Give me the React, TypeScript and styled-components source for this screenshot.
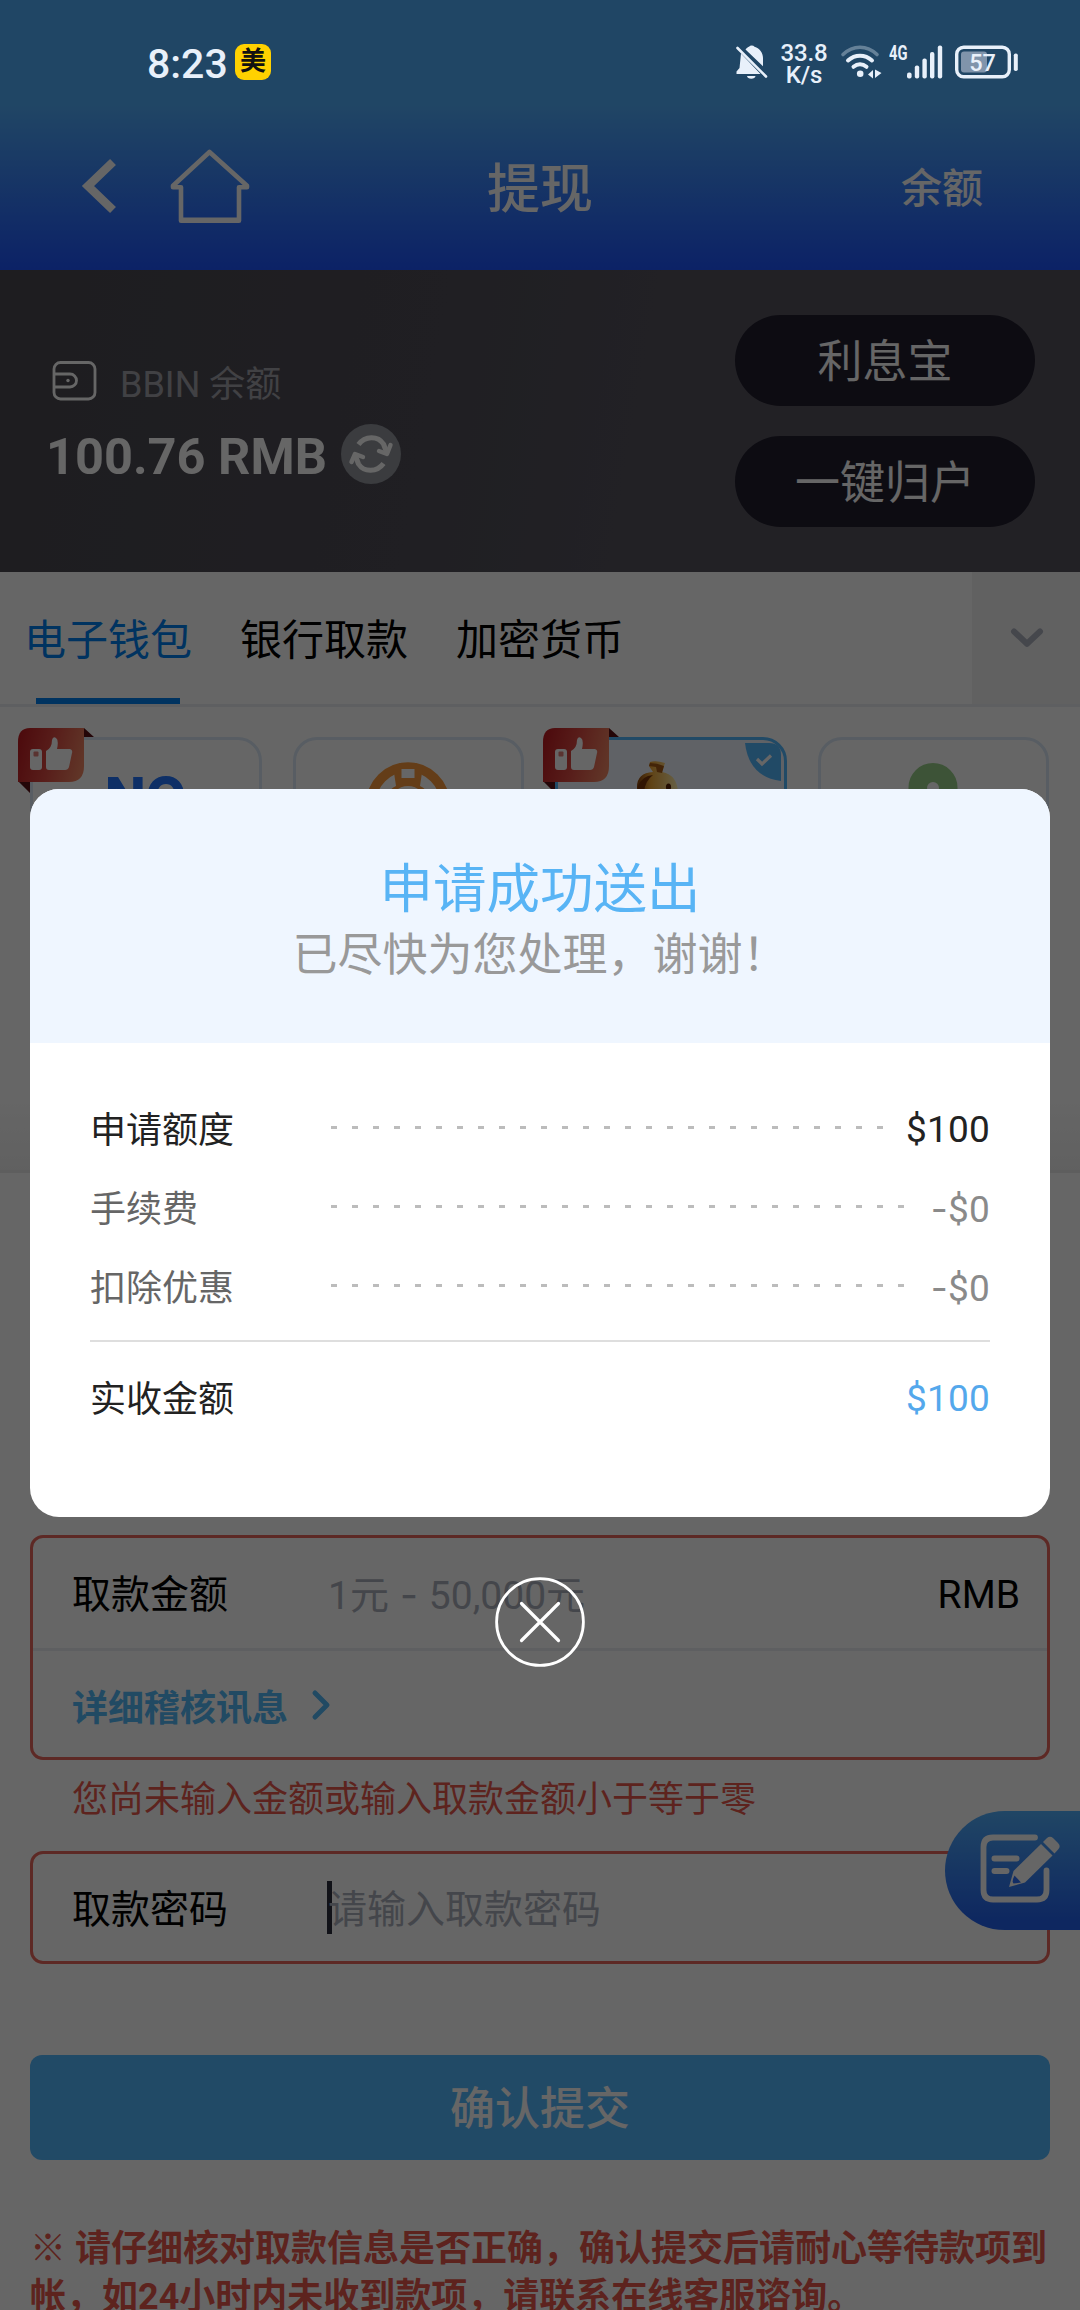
import React from "react";
import styled, { createGlobalStyle } from "styled-components";

const GlobalStyle = createGlobalStyle`
  *, *::before, *::after { box-sizing: border-box; }
  html, body { margin: 0; padding: 0; background: #fff; }
  body { font-family: Roboto, "Noto Sans CJK SC", sans-serif; color: #000; }
  svg { display: block; flex: none; }
`;

const Page = styled.div`
  position: relative;
  width: 1080px;
  height: 2310px;
  overflow: hidden;
  background: #fff;
`;

/* ---------- header ---------- */

const Header = styled.header`
  height: 270px;
  background: linear-gradient(#52affc 0, #52affc 104px, #1e55ff 270px);
`;

const StatusBar = styled.div`
  position: relative;
  z-index: 3;
  height: 104px;
  padding: 20px 61px 0 147px;
  display: flex;
  align-items: center;
  color: #e8f0fa;
`;

const Clock = styled.span`
  font-size: 41px;
  line-height: 48px;
  font-weight: 500;
  width: 88px;
  padding-top: 3px;
`;

const AppBadge = styled.span`
  width: 36px;
  height: 36px;
  border-radius: 9px;
  background: #ffd100;
  color: #111;
  font-size: 26px;
  line-height: 34px;
  font-weight: 700;
  text-align: center;
`;

const StatusIcons = styled.div`
  margin-left: auto;
  display: flex;
  align-items: center;
`;

const NetSpeed = styled.div`
  width: 50px;
  margin: 3px 11px 0 10px;
  font-size: 24px;
  font-weight: 500;
  line-height: 22px;
  text-align: center;
  letter-spacing: -0.2px;
`;

const NavBar = styled.div`
  height: 166px;
  padding: 0 97px 0 81px;
  display: grid;
  grid-template-columns: 1fr auto 1fr;
  align-items: center;
  color: #fff;
`;

const NavLeft = styled.div`
  display: flex;
  align-items: center;
  gap: 51px;
  padding-bottom: 2px;
`;

const NavTitle = styled.h1`
  margin: 5px 0 0 16px;
  font-size: 53px;
  line-height: 60px;
  font-weight: 500;
`;

const NavAction = styled.span`
  justify-self: end;
  padding-top: 3px;
  font-size: 41px;
  line-height: 48px;
  font-weight: 500;
`;

/* ---------- balance ---------- */

const Balance = styled.section`
  height: 302px;
  padding: 45px 45px 0 46px;
  display: flex;
  justify-content: space-between;
  background: linear-gradient(100deg, #4b4951 0%, #504e57 40%, #56545e 62%, #56545e 100%);
`;

const BalanceInfo = styled.div`
  padding-top: 43px;
`;

const BalanceLabel = styled.div`
  display: flex;
  align-items: center;
  height: 45px;
  gap: 23px;
  padding-left: 5px;
  font-size: 36px;
  color: #a3a3ab;
`;

const BalanceAmount = styled.div`
  display: flex;
  align-items: center;
  height: 60px;
  margin-top: 21px;
  gap: 17px;
  font-size: 50.5px;
  font-weight: 700;
  color: #fff;
`;

const AmountText = styled.span`
  width: 278px;
  white-space: nowrap;
  padding-top: 5px;
`;

const PillGroup = styled.div`
  display: flex;
  flex-direction: column;
  gap: 30px;
`;

const Pill = styled.button`
  width: 300px;
  height: 91px;
  border: 0;
  border-radius: 46px;
  padding: 5px 0 0;
  background: #211e2d;
  color: #fff;
  font: 400 45px/60px Roboto, "Noto Sans CJK SC", sans-serif;
`;

/* ---------- tabs ---------- */

const Tabs = styled.nav`
  display: flex;
  height: 135px;
  padding-left: 24px;
  border-bottom: 3px solid #eceef2;
`;

const Tab = styled.div<{ $active?: boolean }>`
  width: 168px;
  margin-right: 48px;
  height: 132px;
  display: flex;
  flex-direction: column;
  align-items: center;
  font-size: 42px;
  line-height: 60px;
  padding-top: 39px;
  white-space: nowrap;
  color: ${(p) => (p.$active ? "#0080f0" : "#000")};
  &::after {
    content: "";
    width: 144px;
    height: 6px;
    margin-top: auto;
    background: ${(p) => (p.$active ? "#0080f0" : "transparent")};
  }
`;

const TabMore = styled.div`
  width: 108px;
  height: 132px;
  margin-left: auto;
  display: flex;
  align-items: center;
  justify-content: center;
  padding-left: 1px;
  background: #f3f3f3;
`;

/* ---------- wallet cards ---------- */

const Wallets = styled.section`
  height: 466px;
  padding: 30px 30px 0;
  display: flex;
  gap: 31px;
  background: linear-gradient(#fff 0, #fff 390px, #f1f1f1 463px);
  border-bottom: 3px solid #eaeaea;
`;

const WalletCard = styled.div<{ $selected?: boolean }>`
  position: relative;
  width: 231.5px;
  height: 200px;
  border: 3px solid ${(p) => (p.$selected ? "#54b8ff" : "#dbe9f7")};
  border-radius: 24px;
  display: flex;
  justify-content: center;
  background: ${(p) => (p.$selected ? "#f0f6ff" : "#fff")};
`;

const Recommend = styled.span`
  position: absolute;
  left: -15px;
  top: -13px;
`;

const SelectedMark = styled.span`
  position: absolute;
  right: 3px;
  top: 3px;
`;

const WordLogo = styled.span`
  margin-top: 27px;
  font: 800 53px/60px Inter, sans-serif;
  color: #2377ff;
`;

const LogoSlot = styled.span<{ $top: number; $shift?: number }>`
  margin-top: ${(p) => p.$top}px;
  margin-left: ${(p) => p.$shift ?? 0}px;
`;

/* ---------- form ---------- */

const Form = styled.form`
  padding: 362px 30px 0;
`;

const FieldBox = styled.div`
  border: 3px solid #e9685c;
  border-radius: 13px;
`;

const Field = styled.div<{ $h: number }>`
  height: ${(p) => p.$h}px;
  display: flex;
  align-items: center;
  padding: 4px 27px 0 39px;
  font-size: 39px;
  line-height: 54px;
`;

const FieldLabel = styled.label`
  width: 255px;
`;

const Placeholder = styled.span`
  flex: 1;
  padding-left: 1px;
  color: #abb0bb;
  white-space: pre;
`;

const Dash = styled.span`
  font-family: Inter, sans-serif;
`;

const Caret = styled.i`
  width: 5px;
  height: 53px;
  margin: -4px -5px 0 0;
  background: #2c2e3e;
`;

const AuditLink = styled.div`
  height: 109px;
  border-top: 3px solid #eceef2;
  padding: 2px 39px 0;
  display: flex;
  align-items: center;
  gap: 23px;
  font-size: 36px;
  font-weight: 700;
  color: #54b8f8;
`;

const ErrorText = styled.p`
  margin: 0;
  height: 91px;
  padding: 15px 42px 0;
  font-size: 36px;
  line-height: 50px;
  color: #e9594d;
`;

const Submit = styled.button`
  display: block;
  width: 1020px;
  height: 105px;
  margin: 91px 0 0;
  padding: 5px 0 0;
  border: 0;
  border-radius: 12px;
  background: #54b8ff;
  color: #fff;
  font: 500 45px/60px Roboto, "Noto Sans CJK SC", sans-serif;
`;

const Notice = styled.p`
  margin: 65px -10px 0 0;
  font-size: 36px;
  line-height: 48px;
  font-weight: 700;
  color: #e9594d;
`;

const FloatButton = styled.div`
  position: absolute;
  right: 0;
  top: 1811px;
  width: 135px;
  height: 119px;
  padding: 21px 0 0 33px;
  border-radius: 60px 0 0 60px;
  background: linear-gradient(#52affc, #2463f0 92%);
`;

/* ---------- dialog ---------- */

const Overlay = styled.div`
  position: absolute;
  inset: 0;
  z-index: 2;
  padding-top: 789px;
  display: flex;
  flex-direction: column;
  align-items: center;
  gap: 60px;
  background: rgba(0, 0, 0, 0.6);
`;

const Dialog = styled.div`
  width: 1020px;
  height: 728px;
  border-radius: 29px;
  overflow: hidden;
  background: #fff;
`;

const DialogHead = styled.div`
  height: 254px;
  padding-top: 68px;
  background: #eff6ff;
  text-align: center;
`;

const DialogTitle = styled.h2`
  margin: 0;
  font-size: 53.5px;
  line-height: 66px;
  font-weight: 400;
  color: #58b4f5;
`;

const DialogSub = styled.p`
  margin: 0;
  font-size: 45px;
  line-height: 66px;
  color: #999;
`;

const DialogBody = styled.div`
  padding: 46px 60px 0;
`;

const Row = styled.div<{ $tone: string }>`
  height: 79px;
  display: flex;
  align-items: center;
  font-size: 36px;
  line-height: 50px;
  color: ${(p) => p.$tone};
`;

const RowLabel = styled.span`
  width: 241px;
  padding-top: 4px;
`;

const Leader = styled.span`
  flex: 1;
  height: 3px;
  margin: -2px 17px 0 0;
  background: repeating-linear-gradient(90deg, #bcbcbc 0 6px, transparent 6px 21px);
`;

const Amount = styled.span<{ $tone: string }>`
  margin-left: auto;
  padding-top: 3px;
  letter-spacing: 0.2px;
  font-size: 37px;
  color: ${(p) => p.$tone};
`;

const Total = styled(Row)`
  margin-top: 14px;
  padding-top: 31px;
  height: 82px;
  border-top: 2px solid #dedede;
`;

const CloseButton = styled.button`
  width: 90px;
  height: 90px;
  padding: 0;
  border: 0;
  background: none;
`;

/* ---------- drawings ---------- */

const BellOff = () => (
  <svg width="34" height="36" viewBox="0 0 34 36" fill="#e8f0fa">
    <path d="M10.500 5.500C11.500 4 13 3 14 2.700a3.200 2.600 0 0 1 5.500 0C25 4.500 28 9 28 14v8.200Z" />
    <path d="M6 9.500 25.500 30H1.500v-2.500L4.500 24Z" />
    <path d="M12 32h8.500a4.300 3.200 0 0 1-8.500 0Z" />
    <path d="M2.500 4 31 32.500" stroke="#e8f0fa" strokeWidth="2.600" strokeLinecap="round" />
  </svg>
);

const Wifi = () => (
  <svg width="42" height="36" viewBox="0 0 42 36" fill="none" stroke="#e8f0fa" strokeLinecap="round">
    <path d="M3 10.500C13 .800 27 .800 37 10.500" strokeWidth="3.600" opacity=".35" />
    <path d="M8 16.500c7-6.400 17-6.400 24 0" strokeWidth="4" />
    <path d="M13.500 22.800c4-3.300 9-3.300 13 0" strokeWidth="4" />
    <circle cx="20.200" cy="29.800" r="3.300" fill="#e8f0fa" stroke="none" />
    <path d="M28 30.500l5-4.500v8.500ZM35 25.500l6.500 3.500-6.500 5Z" fill="#e8f0fa" stroke="none" />
  </svg>
);

const SignalBox = styled.div`
  display: flex;
  margin: 0 10px 0 7px;
`;

const Signal = () => (
  <SignalBox>
    <svg width="56" height="36" viewBox="0 0 56 36" fill="#e8f0fa">
      <text x="0" y="15.500" fontFamily="Roboto" fontWeight="700" fontSize="19.500" textLength="18.500" lengthAdjust="spacingAndGlyphs">4G</text>
      <rect x="18" y="28.500" width="4.600" height="6" rx="2" />
      <rect x="25.800" y="21.500" width="4.400" height="13" rx="2" />
      <rect x="33.400" y="14.500" width="4.400" height="20" rx="2" />
      <rect x="41" y="8" width="4.400" height="26.500" rx="2" />
      <rect x="48.800" y="1.500" width="4.400" height="33" rx="2" />
    </svg>
  </SignalBox>
);

const Battery = () => (
  <svg width="64" height="36" viewBox="1 0 64 36">
    <rect x="7" y="7.500" width="26" height="21" rx="3" fill="#8094ab" />
    <rect x="2.700" y="3.200" width="52.600" height="29.600" rx="7" fill="none" stroke="#e8f0fa" strokeWidth="3.400" />
    <rect x="59.800" y="9.500" width="4" height="17.500" rx="1.800" fill="#e8f0fa" />
    <text x="28.500" y="26.500" textAnchor="middle" fontFamily="Roboto" fontWeight="500" fontSize="23.500" fill="#e8f0fa">57</text>
  </svg>
);

const BackArrow = () => (
  <svg width="36" height="56" viewBox="0 0 36 56" fill="none" stroke="#fff" strokeWidth="8.500">
    <path d="M32 4 7 28l25 24" />
  </svg>
);

const Home = () => (
  <svg width="84" height="80" viewBox="0 0 84 80" fill="none" stroke="#fff" strokeWidth="4.600">
    <path d="M41.500 6 5 39.800v1.500h8v33.400h58V41.300h8v-1.500Z" strokeLinejoin="round" />
    <path d="M13 74.300h58" strokeWidth="5.500" />
  </svg>
);

const Wallet = () => (
  <svg width="46" height="42" viewBox="0 0 46 42" fill="none" stroke="#fff" strokeWidth="2.800">
    <rect x="3" y="2.500" width="41" height="36.500" rx="6.500" />
    <path d="M3 14h16a6.500 6.500 0 0 1 0 13H3" />
    <circle cx="17" cy="20.500" r="1.700" fill="#fff" stroke="none" />
  </svg>
);

const Refresh = () => (
  <svg width="60" height="60" viewBox="0 0 60 60" fill="none">
    <circle cx="30" cy="30" r="30" fill="#93969e" />
    <g stroke="#fff" strokeWidth="5">
      <path d="M17.500 20.500C24 11.500 37 11.500 42.500 20l3 8" />
      <path d="M42.500 39.500C36 48.500 23 48.500 17.500 40l-3-8" />
      <path d="m38 27 8 3 3.500-9" strokeLinecap="round" strokeLinejoin="round" strokeWidth="4.400" />
      <path d="m22 33-8-3-3.500 8" strokeLinecap="round" strokeLinejoin="round" strokeWidth="4.400" />
    </g>
  </svg>
);

const ChevronDown = () => (
  <svg width="34" height="22" viewBox="0 0 34 22" fill="none" stroke="#adb1bf" strokeWidth="6" strokeLinecap="round" strokeLinejoin="round">
    <path d="m4 4.500 13 12.300L30 4.500" />
  </svg>
);

const ThumbBadge = ({ id }: { id: string }) => (
  <Recommend>
    <svg width="77" height="68" viewBox="0 0 77 68">
      <defs>
        <linearGradient id={id} x1="0" y1=".3" x2="1" y2=".5">
          <stop offset="0" stopColor="#c01c22" />
          <stop offset=".5" stopColor="#dc4a42" />
          <stop offset="1" stopColor="#f08462" />
        </linearGradient>
      </defs>
      <path d="M66 1l10 9H66ZM0 54l12 12V54Z" fill="#5a1015" />
      <path d="M12 1h54v38q0 16-15 16H0V15Q0 1 12 1Z" fill={`url(#${id})`} />
      <rect x="12" y="22" width="12" height="21" rx="3" fill="#fff" />
      <rect x="15.500" y="24.500" width="5" height="5" rx="1" fill="#e08078" />
      <path d="M28 24q6-3 6-11 1-4 4-2 3 2 1 11h13q3 1 2 4l-3 14q-1 3-4 3H31q-3 0-3-3Z" fill="#fff" />
    </svg>
  </Recommend>
);

const CheckCorner = () => (
  <SelectedMark>
    <svg width="36" height="38" viewBox="0 0 36 38">
      <path d="M0 0h24q12 0 12 12v26Q4 34 0 0Z" fill="#54b8ff" />
      <path d="m12 16 5 5 9-8.500" fill="none" stroke="#fff" strokeWidth="3.200" />
    </svg>
  </SelectedMark>
);

const WheelLogo = () => (
  <svg width="86" height="86" viewBox="0 0 86 86">
    <circle cx="43" cy="43" r="37" fill="none" stroke="#fb9a3c" strokeWidth="9.500" />
    <path d="M28 5h30l-3 20a22 22 0 0 1 10 10L43 55 21 35a22 22 0 0 1 10-10Z" fill="#fb9a3c" />
    <rect x="36.500" y="8" width="13" height="9" fill="#fff" />
    <circle cx="43" cy="43" r="18" fill="#fff" opacity=".95" />
    <circle cx="43" cy="43" r="11" fill="#fb9a3c" />
  </svg>
);

const GoldLogo = () => (
  <svg width="46" height="46" viewBox="0 0 46 46">
    <defs>
      <linearGradient id="gold" x1="0" x2="1">
        <stop offset="0" stopColor="#8a4208" />
        <stop offset=".35" stopColor="#f0a838" />
        <stop offset="1" stopColor="#fff0b0" />
      </linearGradient>
    </defs>
    <path d="M15 1q6-2 15 1l-3 9q16 3 16 22v12H2V26Q2 12 18 11l-4-6Z" fill="url(#gold)" />
    <path d="M15 2q7 0 14 3l-2 7-5-1-1-5-7-1Z" fill="#a85a14" />
    <path d="M3 25q4-10 15-11-8 6-9 17H3Z" fill="#7a3608" />
    <ellipse cx="33.500" cy="26" rx="2.600" ry="3.600" fill="#5a2505" />
  </svg>
);

const GreenLogo = () => (
  <svg width="50" height="60" viewBox="0 0 50 60">
    <path d="M25 0a24.500 24.500 0 0 1 24.500 24.500V60H.500V24.500A24.500 24.500 0 0 1 25 0Z" fill="#99d08a" />
    <circle cx="25" cy="25" r="6" fill="#fff" />
  </svg>
);

const ChevronRight = () => (
  <svg width="20" height="32" viewBox="0 0 20 32" fill="none" stroke="#54b8f8" strokeWidth="5" strokeLinecap="round" strokeLinejoin="round">
    <path d="m4 4 12 12L4 28" />
  </svg>
);

const EditIcon = () => (
  <svg width="84" height="74" viewBox="0 0 84 74" fill="none">
    <path d="M57 5.500H15Q5.500 5.500 5.500 15v43q0 9.500 9.500 9.500h44q9.500 0 9.500-9.500V38.500" stroke="#fff" strokeWidth="5.800" strokeLinecap="round" />
    <path d="M16.500 26.500h22M16.500 39h12" stroke="#fff" strokeWidth="6" strokeLinecap="round" />
    <path d="M63 12 74.500 23.500 47 50.500l-16 4.500 4.500-16Z" fill="#fff" />
    <path d="m65 10 4-4q3-2.500 6 0l5 5q3 3 .500 6l-4 4.500Z" fill="#fff" />
    <path d="m36.500 43.500 6.500 7-7.500 1q-2-2 1-8Z" fill="#2f72fd" />
  </svg>
);

const CloseIcon = () => (
  <svg width="90" height="90" viewBox="0 0 90 90" fill="none" stroke="#fff" strokeWidth="2.800">
    <circle cx="45" cy="45" r="43.400" />
    <path d="m26.500 26.500 37 37m0-37-37 37" strokeWidth="3.200" strokeLinecap="round" />
  </svg>
);

/* ---------- data ---------- */

const tabs = ["电子钱包", "银行取款", "加密货币"];

const fees = [
  { label: "申请额度", value: "$100", tone: "#222", valueTone: "#222" },
  { label: "手续费", value: "$0", minus: true, tone: "#666", valueTone: "#8a8a8a" },
  { label: "扣除优惠", value: "$0", minus: true, tone: "#666", valueTone: "#8a8a8a" },
];

export default function App() {
  return (
    <Page>
      <GlobalStyle />
      <Header>
        <StatusBar>
          <Clock>8:23</Clock>
          <AppBadge>美</AppBadge>
          <StatusIcons>
            <BellOff />
            <NetSpeed>
              33.8
              <br />
              K/s
            </NetSpeed>
            <Wifi />
            <Signal />
            <Battery />
          </StatusIcons>
        </StatusBar>
        <NavBar>
          <NavLeft>
            <BackArrow />
            <Home />
          </NavLeft>
          <NavTitle>提现</NavTitle>
          <NavAction>余额</NavAction>
        </NavBar>
      </Header>

      <Balance>
        <BalanceInfo>
          <BalanceLabel>
            <Wallet />
            <span>BBIN 余额</span>
          </BalanceLabel>
          <BalanceAmount>
            <AmountText>100.76 RMB</AmountText>
            <Refresh />
          </BalanceAmount>
        </BalanceInfo>
        <PillGroup>
          <Pill>利息宝</Pill>
          <Pill>一键归户</Pill>
        </PillGroup>
      </Balance>

      <Tabs>
        {tabs.map((name, i) => (
          <Tab key={name} $active={i === 0}>
            {name}
          </Tab>
        ))}
        <TabMore>
          <ChevronDown />
        </TabMore>
      </Tabs>

      <Wallets>
        <WalletCard>
          <WordLogo>NO</WordLogo>
          <ThumbBadge id="ribbon-a" />
        </WalletCard>
        <WalletCard>
          <LogoSlot $top={21}>
            <WheelLogo />
          </LogoSlot>
        </WalletCard>
        <WalletCard $selected>
          <LogoSlot $top={21} $shift={-26}>
            <GoldLogo />
          </LogoSlot>
          <ThumbBadge id="ribbon-b" />
          <CheckCorner />
        </WalletCard>
        <WalletCard>
          <LogoSlot $top={23}>
            <GreenLogo />
          </LogoSlot>
        </WalletCard>
      </Wallets>

      <Form>
        <FieldBox>
          <Field $h={110}>
            <FieldLabel>取款金额</FieldLabel>
            <Placeholder>
              1元<Dash> - </Dash>50,000元
            </Placeholder>
            <span>RMB</span>
          </Field>
          <AuditLink>
            详细稽核讯息
            <ChevronRight />
          </AuditLink>
        </FieldBox>
        <ErrorText>您尚未输入金额或输入取款金额小于等于零</ErrorText>
        <FieldBox>
          <Field $h={107}>
            <FieldLabel>取款密码</FieldLabel>
            <Caret />
            <Placeholder>请输入取款密码</Placeholder>
          </Field>
        </FieldBox>
        <Submit type="button">确认提交</Submit>
        <Notice>※ 请仔细核对取款信息是否正确，确认提交后请耐心等待款项到帐，如24小时内未收到款项，请联系在线客服谘询。</Notice>
      </Form>

      <FloatButton>
        <EditIcon />
      </FloatButton>

      <Overlay>
        <Dialog role="dialog">
          <DialogHead>
            <DialogTitle>申请成功送出</DialogTitle>
            <DialogSub>已尽快为您处理，谢谢！</DialogSub>
          </DialogHead>
          <DialogBody>
            {fees.map((fee) => (
              <Row key={fee.label} $tone={fee.tone}>
                <RowLabel>{fee.label}</RowLabel>
                <Leader />
                <Amount $tone={fee.valueTone}>
                  {fee.minus && <Dash>-</Dash>}
                  {fee.value}
                </Amount>
              </Row>
            ))}
            <Total $tone="#222">
              <RowLabel>实收金额</RowLabel>
              <Amount $tone="#54a8ec">$100</Amount>
            </Total>
          </DialogBody>
        </Dialog>
        <CloseButton aria-label="关闭">
          <CloseIcon />
        </CloseButton>
      </Overlay>
    </Page>
  );
}
